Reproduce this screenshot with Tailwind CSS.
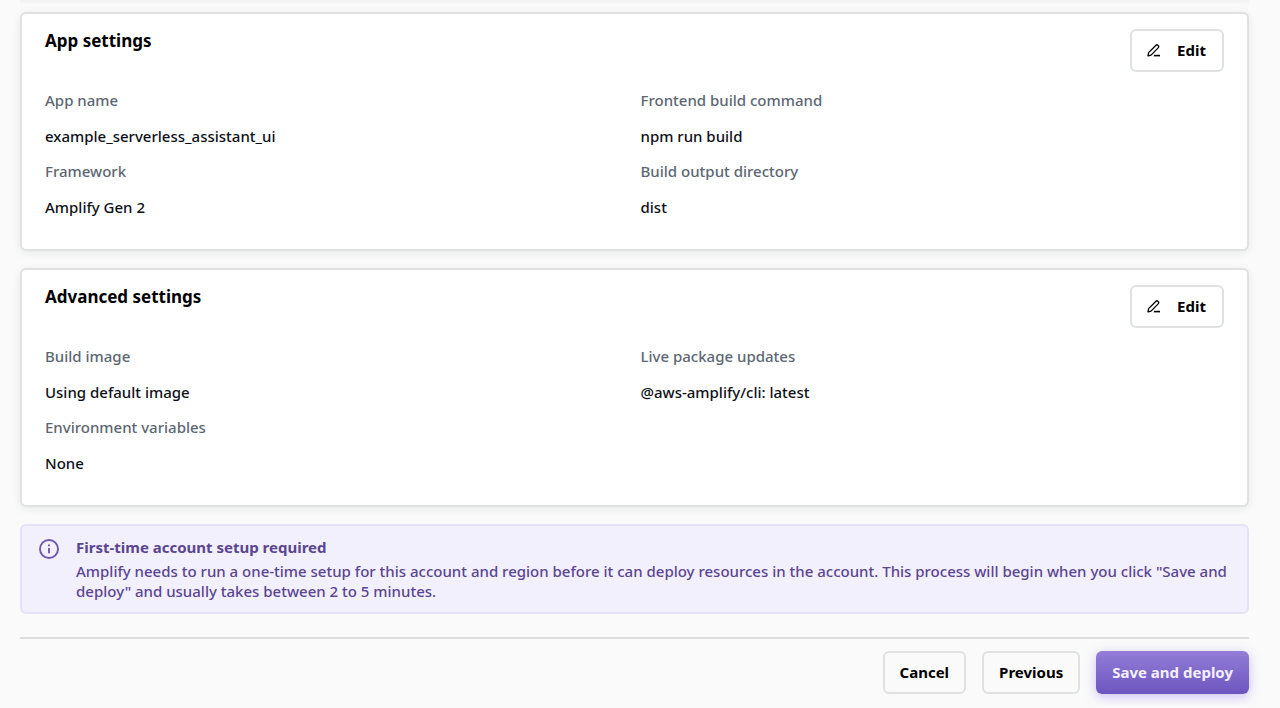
<!DOCTYPE html>
<html lang="en">
<head>
<meta charset="utf-8">
<meta name="viewport" content="width=device-width, initial-scale=1">
<title>Review</title>
<script src="https://cdn.jsdelivr.net/npm/@tailwindcss/browser@4"></script>
</head>
<body class="bg-[#fafafa] font-['Noto_Sans',sans-serif] text-[15px] leading-6 font-medium text-[#0d1117]">
<div class="h-3 pr-[31px] pl-5"><div class="h-1 bg-linear-to-b from-[#f3f3f4] to-[#f8f8f8]"></div></div>
<main class="ml-5 mr-[31px]">
  <div class="flex flex-col gap-[17px]">
    <section class="rounded-md border-2 border-[#dfe1e3] bg-white px-[23px] pt-[15px] pb-[30px] shadow-[0_2px_8px_rgba(13,26,38,0.08)]">
      <div class="flex items-start justify-between">
        <h2 class="text-[17px] font-bold text-black">App settings</h2>
        <button type="button" class="flex h-[43px] items-center gap-4 rounded-md border-2 border-[#dfe1e3] px-4 pb-0.5 pl-[15px] text-[15px] font-bold text-black">
          <svg class="size-[14px]" viewBox="0 0 14 14" fill="none" stroke="currentColor" stroke-width="1.3" stroke-linejoin="round" aria-hidden="true"><path d="M1 12.8l.6-3.2L9 2.2a1.3 1.3 0 0 1 1.8 0l.6.6a1.3 1.3 0 0 1 0 1.8L4 12.1z"/><path d="M6.8 12.6h6.2" stroke-width="1.6"/></svg>
          Edit
        </button>
      </div>
      <dl class="mt-4 grid grid-cols-2 gap-x-3 gap-y-[11px]">
        <div><dt class="mb-3 text-[#5c6773]">App name</dt><dd>example_serverless_assistant_ui</dd></div>
        <div><dt class="mb-3 text-[#5c6773]">Frontend build command</dt><dd>npm run build</dd></div>
        <div><dt class="mb-3 text-[#5c6773]">Framework</dt><dd>Amplify Gen 2</dd></div>
        <div><dt class="mb-3 text-[#5c6773]">Build output directory</dt><dd>dist</dd></div>
      </dl>
    </section>
    <section class="rounded-md border-2 border-[#dfe1e3] bg-white px-[23px] pt-[15px] pb-[30px] shadow-[0_2px_8px_rgba(13,26,38,0.08)]">
      <div class="flex items-start justify-between">
        <h2 class="text-[17px] font-bold text-black">Advanced settings</h2>
        <button type="button" class="flex h-[43px] items-center gap-4 rounded-md border-2 border-[#dfe1e3] px-4 pb-0.5 pl-[15px] text-[15px] font-bold text-black">
          <svg class="size-[14px]" viewBox="0 0 14 14" fill="none" stroke="currentColor" stroke-width="1.3" stroke-linejoin="round" aria-hidden="true"><path d="M1 12.8l.6-3.2L9 2.2a1.3 1.3 0 0 1 1.8 0l.6.6a1.3 1.3 0 0 1 0 1.8L4 12.1z"/><path d="M6.8 12.6h6.2" stroke-width="1.6"/></svg>
          Edit
        </button>
      </div>
      <dl class="mt-4 grid grid-cols-2 gap-x-3 gap-y-[11px]">
        <div><dt class="mb-3 text-[#5c6773]">Build image</dt><dd>Using default image</dd></div>
        <div><dt class="mb-3 text-[#5c6773]">Live package updates</dt><dd>@aws-amplify/cli: latest</dd></div>
        <div><dt class="mb-3 text-[#5c6773]">Environment variables</dt><dd>None</dd></div>
      </dl>
    </section>
    <div role="status" class="flex items-start gap-[17px] rounded-md border-2 border-[#e6e1f8] bg-[#f3f0fd] pt-[9px] pr-[15px] pb-[11px] pl-[17px] text-[#5a4591]">
      <svg class="mt-1 size-5 shrink-0 text-[#6f57ae]" viewBox="0 0 20 20" fill="none" stroke="currentColor" stroke-width="1.9" aria-hidden="true"><circle cx="10" cy="10" r="9"/><path d="M10 9v5.2M10 5.4v1.9"/></svg>
      <div>
        <h3 class="font-bold">First-time account setup required</h3>
        <p class="mt-0.5 leading-5">Amplify needs to run a one-time setup for this account and region before it can deploy resources in the account. This process will begin when you click "Save and deploy" and usually takes between 2 to 5 minutes.</p>
      </div>
    </div>
  </div>
  <hr class="mt-[23px] border-t-2 border-[#dcdddf]">
  <div class="mt-3 mb-3 flex justify-end gap-4 text-[15px] font-bold">
    <button type="button" class="h-[43px] rounded-md border-2 border-[#dfe1e3] px-[15px] pb-0.5 text-black">Cancel</button>
    <button type="button" class="h-[43px] rounded-md border-2 border-[#dfe1e3] px-[15px] pb-0.5 text-black">Previous</button>
    <button type="button" class="h-[43px] rounded-md bg-linear-to-b from-[#937dd8] to-[#6d55bf] px-4 pb-0.5 text-[#f3f0fd] shadow-[0_3px_12px_rgba(120,90,240,0.35)]">Save and deploy</button>
  </div>
</main>
</body>
</html>
